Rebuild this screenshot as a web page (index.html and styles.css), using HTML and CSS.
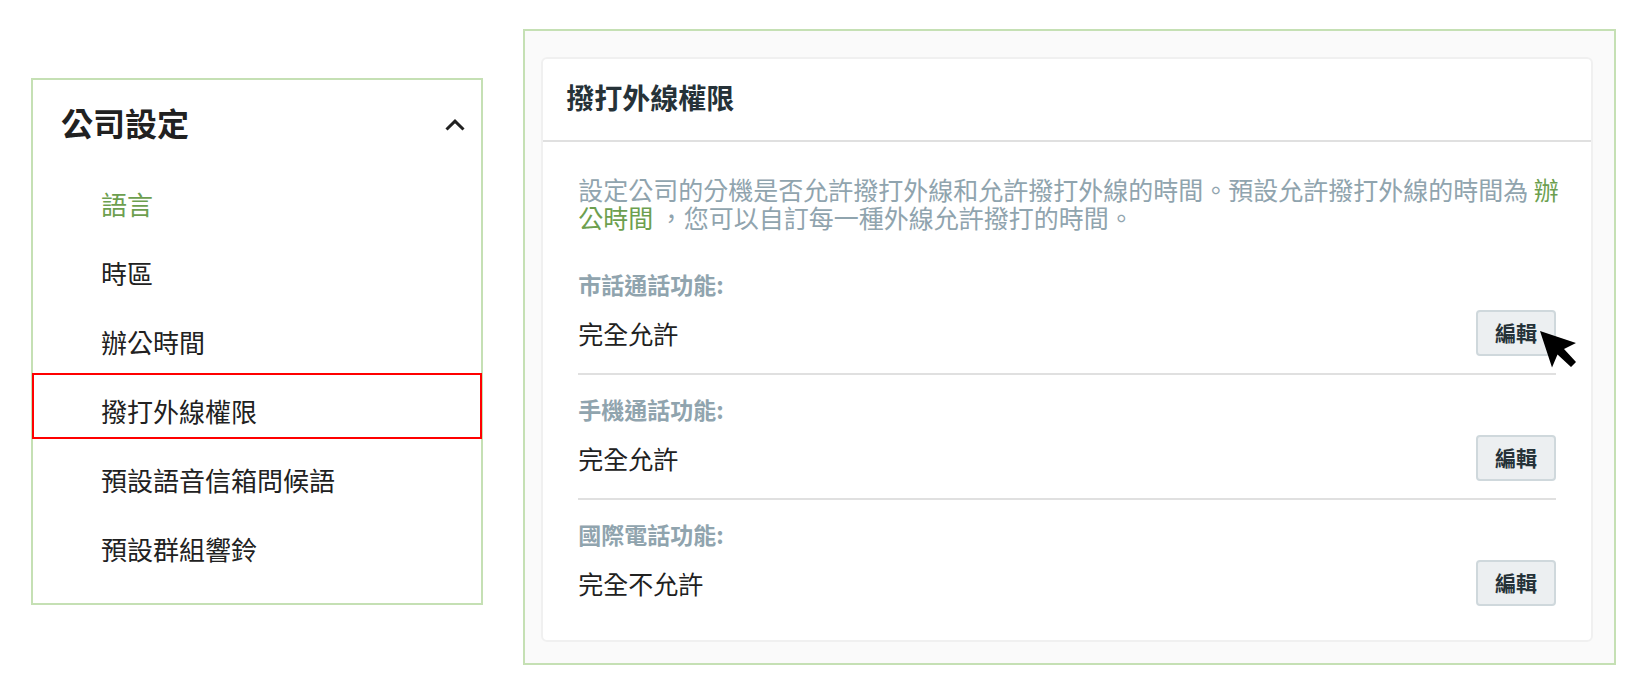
FILE: index.html
```html
<!DOCTYPE html>
<html lang="zh-Hant">
<head>
    <meta charset="UTF-8">
    <meta name="viewport" content="width=device-width, initial-scale=1.0">
    <title>撥打外線權限</title>
    <link rel="stylesheet" href="styles.css">
</head>
<body>
    <div class="layout">
        <nav class="sidebar">
            <button class="sidebar-toggle" type="button" aria-expanded="true">
                <span>公司設定</span>
                <svg class="chevron" viewBox="0 0 20 12" aria-hidden="true">
                    <path d="M1.5 10.5 10 2.2l8.500 8.300" />
                </svg>
            </button>
            <ul class="menu">
                <li><a class="menu-link active" href="#">語言</a></li>
                <li><a class="menu-link" href="#">時區</a></li>
                <li><a class="menu-link" href="#">辦公時間</a></li>
                <li><a class="menu-link highlighted" href="#">撥打外線權限</a></li>
                <li><a class="menu-link" href="#">預設語音信箱問候語</a></li>
                <li><a class="menu-link" href="#">預設群組響鈴</a></li>
            </ul>
        </nav>

        <main class="content">
            <section class="card">
                <h1 class="card-title">撥打外線權限</h1>
                <div class="card-body">
                    <p class="description">設定公司的分機是否允許撥打外線和允許撥打外線的時間。預設允許撥打外線的時間為 <a href="#">辦公時間</a> ，您可以自訂每一種外線允許撥打的時間。</p>

                    <div class="setting">
                        <h2 class="setting-label">市話通話功能:</h2>
                        <div class="setting-row">
                            <span class="setting-value">完全允許</span>
                            <div class="setting-action">
                                <button class="edit-btn" type="button">編輯</button>
                                <svg class="pointer" viewBox="0 0 37 37" aria-hidden="true">
                                    <path d="M0 0 36 12 24 18 36 31 31 36 17.500 23.500 12 36.500Z" />
                                </svg>
                            </div>
                        </div>
                    </div>

                    <div class="setting">
                        <h2 class="setting-label">手機通話功能:</h2>
                        <div class="setting-row">
                            <span class="setting-value">完全允許</span>
                            <button class="edit-btn" type="button">編輯</button>
                        </div>
                    </div>

                    <div class="setting">
                        <h2 class="setting-label">國際電話功能:</h2>
                        <div class="setting-row">
                            <span class="setting-value">完全不允許</span>
                            <button class="edit-btn" type="button">編輯</button>
                        </div>
                    </div>
                </div>
            </section>
        </main>
    </div>
</body>
</html>
```
FILE: styles.css
```css
* {
    margin: 0;
    padding: 0;
    box-sizing: border-box;
}

body {
    font-family: 'Noto Sans CJK TC', sans-serif;
    background: #fff;
    color: #212121;
}

a {
    color: #6d9f4f;
    text-decoration: none;
}

.layout {
    display: grid;
    grid-template-columns: 12fr 29fr;
    gap: 40px;
    align-items: start;
    padding: 29px 21px 29px 31px;
}

/* Sidebar */
.sidebar {
    margin-top: 49px;
    padding-bottom: 26px;
    border: 2px solid #c5e0b4;
}

.sidebar-toggle {
    display: flex;
    align-items: center;
    justify-content: space-between;
    width: 100%;
    padding: 20px 16px 21px 28px;
    border: none;
    background: none;
    color: #212121;
    font-family: inherit;
    font-size: 32px;
    font-weight: 700;
    line-height: 45px;
    cursor: pointer;
}

.chevron {
    width: 20px;
    height: 12px;
    margin-top: 4px;
    fill: none;
    stroke: #212121;
    stroke-width: 3;
}

.menu {
    display: grid;
    gap: 3px;
    margin: 0 -1px;
    list-style: none;
}

.menu-link {
    display: block;
    padding: 18px 20px 8px 67px;
    border: 2px solid transparent;
    color: #212121;
    font-size: 26px;
    line-height: 36px;
}

.menu-link.active {
    color: #6d9f4f;
}

.menu-link.highlighted {
    border-color: #ff0000;
}

/* Content */
.content {
    padding: 26px 21px 21px 16px;
    border: 2px solid #c5e0b4;
    background: #fafafa;
}

.card {
    border: 2px solid #f0f0f0;
    border-radius: 6px;
    background: #fff;
}

.card-title {
    padding: 22px 23px 26px;
    border-bottom: 2px solid #e0e0e0;
    color: #263238;
    font-size: 28px;
    font-weight: 700;
    line-height: 33px;
}

.card-body {
    padding: 33px 0 17px;
}

.description {
    padding: 0 24px 19px 35px;
    color: #90a4ae;
    font-size: 25px;
    line-height: 28px;
}

.setting {
    margin: 0 35px;
    padding: 20px 0 17px;
    border-bottom: 2px solid #e0e0e0;
}

.setting:last-child {
    border-bottom: none;
}

.setting-label {
    margin-bottom: 12px;
    color: #90a4ae;
    font-size: 23px;
    font-weight: 700;
    line-height: 28px;
}

.setting-row {
    display: flex;
    align-items: center;
    justify-content: space-between;
}

.setting-value {
    font-size: 25px;
    line-height: 36px;
}

.setting-action {
    position: relative;
}

.edit-btn {
    display: block;
    padding: 5px 17px 7px;
    border: 2px solid #cfd8dc;
    border-radius: 4px;
    background: #eceff1;
    color: #263238;
    font-family: inherit;
    font-size: 21px;
    font-weight: 700;
    line-height: 30px;
    cursor: pointer;
}

.pointer {
    position: absolute;
    top: 21px;
    left: 64px;
    width: 37px;
    height: 37px;
    pointer-events: none;
}
```
